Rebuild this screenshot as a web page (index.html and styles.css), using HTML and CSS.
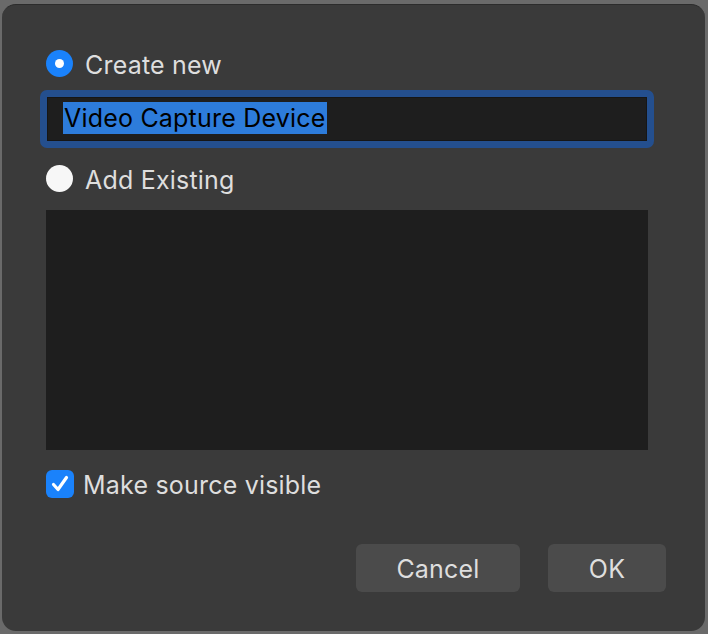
FILE: index.html
```html
<!DOCTYPE html>
<html>
<head>
<meta charset="utf-8">
<link rel="stylesheet" href="styles.css">
</head>
<body>
<div class="dialog">
  <label class="option">
    <span class="radio checked"><span class="dot"></span></span>
    <span class="label">Create new</span>
  </label>
  <div class="field"><span class="sel">Video Capture Device</span></div>
  <label class="option second">
    <span class="radio"></span>
    <span class="label">Add Existing</span>
  </label>
  <div class="list"></div>
  <label class="option check-row">
    <span class="checkbox">
      <svg width="28" height="28" viewBox="0 0 28 28"><path d="M7.5 14.5 L12 19.5 L20.5 7.5" fill="none" stroke="#fff" stroke-width="3.2" stroke-linecap="round" stroke-linejoin="round"/></svg>
    </span>
    <span class="label cb-label">Make source visible</span>
  </label>
  <div class="buttons">
    <button class="btn cancel">Cancel</button>
    <button class="btn ok">OK</button>
  </div>
</div>
</body>
</html>
```
FILE: styles.css
```css
html, body {
  margin: 0;
  padding: 0;
  background: #6a6a6a;
  width: 708px;
  height: 634px;
  overflow: hidden;
}
.dialog {
  box-sizing: border-box;
  margin: 4px 0 0 2px;
  width: 703px;
  height: 627px;
  background: #3a3a3a;
  border-radius: 14px;
  border-top: 1px solid #2c2c2c;
  padding: 45px 0 0 44px;
  display: flex;
  flex-direction: column;
  font-family: Inter, "Liberation Sans", sans-serif;
  font-size: 25px;
  letter-spacing: 0.2px;
  color: #dedede;
}
.option {
  display: flex;
  align-items: center;
  height: 27px;
}
.radio {
  width: 27px;
  height: 27px;
  border-radius: 50%;
  background: #f7f7f7;
  display: flex;
  align-items: center;
  justify-content: center;
  flex: none;
}
.radio.checked {
  background: #1a82fb;
}
.dot {
  width: 9px;
  height: 9px;
  border-radius: 50%;
  background: #fff;
}
.label {
  margin-left: 12px;
  line-height: 27px;
  padding-top: 3px;
}
.field {
  box-sizing: border-box;
  margin: 13px 0 0 -6px;
  width: 614px;
  height: 58px;
  border: 7px solid #244f8e;
  border-radius: 7px;
  background: #1e1e1e;
  box-shadow: inset 0 0 0 1px #161616;
  padding: 5px 0 0 16px;
}
.sel {
  display: inline-block;
  background: #2d7cdb;
  color: #000;
  height: 32px;
  line-height: 33px;
  padding: 0 2px 0 1px;
}
.second {
  margin-top: 17px;
}
.list {
  margin-top: 18px;
  width: 602px;
  height: 240px;
  background: #1e1e1e;
}
.check-row {
  margin-top: 20px;
  height: 28px;
}
.checkbox {
  width: 28px;
  height: 28px;
  border-radius: 6px;
  background: #1a82fb;
  flex: none;
  display: block;
}
.checkbox svg {
  display: block;
}
.cb-label {
  margin-left: 9px;
}
.buttons {
  margin-top: 46px;
  display: flex;
  justify-content: flex-end;
  gap: 28px;
  padding-right: 39px;
}
.btn {
  height: 48px;
  border: none;
  border-radius: 6px;
  background: #4b4b4b;
  color: #dedede;
  font-family: Inter, "Liberation Sans", sans-serif;
  font-size: 25px;
  letter-spacing: 0.2px;
  padding: 2px 0 0;
}
.cancel { width: 164px; }
.ok { width: 118px; }
```
